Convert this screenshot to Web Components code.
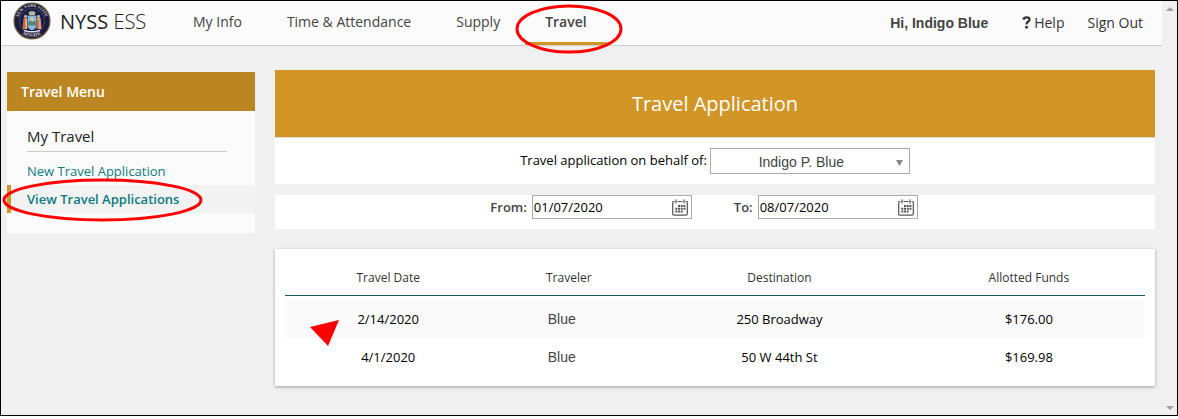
<!DOCTYPE html>
<html lang="en">
<head>
<meta charset="utf-8">
<title>NYSS ESS - Travel</title>
<style>
  html { background: #fff; }
  body { margin: 0; font-family: "Open Sans", sans-serif; font-size: 13px; line-height: 20px; color: #000; }
</style>
</head>
<body>
<ess-app></ess-app>

<script>
const define = (name, html, extra) => {
  const template = document.createElement('template');
  template.innerHTML = html;
  customElements.define(name, class extends HTMLElement {
    constructor() {
      super();
      this.attachShadow({ mode: 'open' }).append(template.content.cloneNode(true));
    }
    connectedCallback() { if (extra) extra(this, this.shadowRoot); }
  });
};

define('ess-seal', `
  <style>
    :host { display: block; width: 38px; height: 38px; flex: none; }
    svg { display: block; width: 100%; height: 100%; }
    text { font-family: "Liberation Serif", serif; font-weight: bold; fill: #d3cdcc; }
    .top { font-size: 4px; }
    .foot { font-size: 5px; }
  </style>
  <svg viewBox="0 0 38 38" role="img" aria-label="New York State Senate seal">
    <defs>
      <path id="top" d="M5.400 21 A13.800 13.800 0 1 1 32.600 21"/>
      <path id="foot" d="M7 29.500 A16 16 0 0 0 31 29.500"/>
    </defs>
    <circle cx="19" cy="19" r="18" fill="#1c1c3c" stroke="#7c6648" stroke-width="1.200"/>
    <circle cx="19" cy="19" r="12.600" fill="#18204a" stroke="#55506a" stroke-width=".6"/>
    <text class="top"><textPath href="#top" startOffset="50%" text-anchor="middle">NEW YORK STATE</textPath></text>
    <text class="foot"><textPath href="#foot" startOffset="50%" text-anchor="middle">SENATE</textPath></text>
    <path d="M14.500 13.500h9V23q0 3.500-4.500 5q-4.500-1.500-4.500-5z" fill="#7fb4e0"/>
    <path d="M14.500 21l3-2.500 2 1.500 2-1 2 2v2.500h-9z" fill="#56866f"/>
    <path d="M15 24h8q-1 3-4 4q-3-1-4-4z" fill="#8fb8d8"/>
    <circle cx="19" cy="17" r="1.700" fill="#f0d27a"/>
    <path d="M15.500 10.500q3.500-3 7 0l-1 2.500h-5z" fill="#d9c08a"/>
    <path d="M17.500 10h3v1.500h-3z" fill="#7fa8d8"/>
    <path d="M10.500 16h3.500l.5 11h-5z" fill="#d0683c"/>
    <path d="M12.500 17h1.500v10h-1.500z" fill="#e8c0a0"/>
    <path d="M24 16h3.500l1 11h-5z" fill="#e0a088"/>
    <path d="M24 18h1.500v9h-1.500z" fill="#c8603c"/>
    <circle cx="12.500" cy="14.500" r="1.400" fill="#e0bca0"/>
    <circle cx="25.500" cy="14.500" r="1.400" fill="#e0bca0"/>
    <path d="M10.500 27.500q8.500 3 17 0l-1 2q-7.500 2-15 0z" fill="#d5d8e2"/>
  </svg>`);

define('ess-ring', `
  <style>
    :host { display: block; position: absolute; pointer-events: none; z-index: 2; }
    svg { display: block; width: 100%; height: 100%; overflow: visible; }
    ellipse { fill: none; stroke: #f00; stroke-width: 3px; }
  </style>
  <svg aria-hidden="true"><ellipse cx="50%" cy="50%" rx="50%" ry="50%"/></svg>`);

define('ess-nav-link', `
  <style>
    :host { display: flex; position: relative; }
    a { box-sizing: border-box; height: 44px; padding: 0 20px; line-height: 42px; font-size: 14px; color: #444; text-decoration: none; }
    :host([current]) a { border-bottom: 3px solid #d19525; font-weight: 600; }
    ess-ring { display: none; left: -8px; top: 5px; width: 104px; height: 46px; }
    :host([current]) ess-ring { display: block; }
  </style>
  <a href="#"><slot></slot></a><ess-ring></ess-ring>`);

define('ess-topbar', `
  <style>
    :host { display: flex; align-items: flex-start; box-sizing: border-box; height: 45px; padding: 0 19px 0 12px; background: #fbfbfb; border-bottom: 1px solid #ccc; }
    .brand { display: flex; gap: 9px; padding-top: 1px; width: 160px; font-size: 20px; line-height: 40px; color: #222; white-space: nowrap; text-decoration: none; }
    .brand b { font-weight: 400; }
    .brand span { font-weight: 300; }
    nav { display: flex; gap: 5px; flex: 1; }
    .user { display: flex; line-height: 44px; font-size: 14px; color: #333; white-space: nowrap; }
    .user strong { font-family: "Liberation Sans", sans-serif; color: #444; margin-right: 34px; }
    .user a { color: #333; text-decoration: none; margin-right: 23px; display: flex; align-items: center; gap: 3px; }
    .user a:last-child { margin-right: 0; }
    svg { display: block; }
  </style>
  <a class="brand" href="#"><ess-seal></ess-seal><div><b>NYSS</b> <span>ESS</span></div></a>
  <nav>
    <ess-nav-link>My Info</ess-nav-link>
    <ess-nav-link>Time &amp; Attendance</ess-nav-link>
    <ess-nav-link>Supply</ess-nav-link>
    <ess-nav-link current>Travel</ess-nav-link>
  </nav>
  <div class="user">
    <strong>Hi, Indigo Blue</strong>
    <a href="#"><svg width="9" height="15" viewBox="0 0 9 15" aria-hidden="true"><path d="M1.300 3.600Q2 1.300 4.500 1.300q3 0 3 2.200 0 1.300-1.500 2.200Q4.500 6.600 4.500 8.500" fill="none" stroke="#333" stroke-width="2.200"/><path d="M3.200 10h2.600v2.500H3.200z" fill="#333"/></svg>Help</a>
    <a href="#">Sign Out</a>
  </div>`);

define('ess-menu-link', `
  <style>
    :host { display: block; position: relative; }
    a { display: block; padding: 0 16px; border-left: 4px solid transparent; line-height: 28px; color: #0c7b80; text-decoration: none; }
    :host([current]) a { background: #f3f3f3; border-color: #d19525; font-weight: 600; }
    ess-ring { display: none; left: -3px; top: -5px; width: 197px; height: 40px; }
    :host([current]) ess-ring { display: block; }
  </style>
  <a href="#"><slot></slot></a><ess-ring></ess-ring>`);

define('ess-sidebar', `
  <style>
    :host { display: block; width: 248px; flex: none; background: #fbfbfb; padding-bottom: 20px; box-sizing: border-box; }
    h2 { margin: 0; padding: 0 14px; font-size: 14px; font-weight: 600; line-height: 39px; color: #fff; background: #bb8621; }
    h3 { margin: 10px 28px 5px 20px; font-size: 15px; font-weight: 500; line-height: 30px; color: #222; border-bottom: 1px solid #ccc; }
  </style>
  <h2>Travel Menu</h2>
  <h3>My Travel</h3>
  <nav>
    <ess-menu-link>New Travel Application</ess-menu-link>
    <ess-menu-link current>View Travel Applications</ess-menu-link>
  </nav>`);

define('ess-traveler-select', `
  <style>
    :host { display: flex; justify-content: center; gap: 3px; padding: 10px 0; background: #fff; border-top: 1px solid #ddd; }
    label { line-height: 24px; }
    .box { display: grid; align-items: center; }
    select, svg { grid-area: 1 / 1; }
    select { appearance: none; box-sizing: border-box; width: 200px; height: 26px; margin: 0; padding: 2px 17px 0 0; border: 1px solid #aaa; border-radius: 0; background: #fff; color: #444; font: 14px "Liberation Sans", sans-serif; text-align: center; text-align-last: center; }
    svg { justify-self: end; margin: 4px 7px 0 0; pointer-events: none; }
  </style>
  <label for="who">Travel application on behalf of:</label>
  <div class="box">
    <select id="who"><option>Indigo P. Blue</option></select>
    <svg width="7" height="6" aria-hidden="true"><path d="M0 0h7L3.500 6z" fill="#888"/></svg>
  </div>`);

define('ess-date-field', `
  <style>
    :host { display: flex; gap: 5px; }
    label { font-weight: 600; line-height: 24px; color: #444; }
    .box { display: grid; align-items: center; }
    input, svg { grid-area: 1 / 1; }
    input { box-sizing: border-box; width: 160px; height: 24px; margin: 0; padding: 0 24px 0 1px; border: 1px solid #aaa; background: #fff; color: #000; font: 13px "Open Sans", sans-serif; }
    svg { justify-self: end; margin-right: 4px; pointer-events: none; }
  </style>
  <label for="date"></label>
  <div class="box">
    <input id="date" type="text">
    <svg width="16" height="17" viewBox="0 0 16 17" aria-hidden="true">
      <path d="M2.500 2.500H1.500q-.8 0-.8.8V15q0 1.200 1.200 1.200h12.200q1.200 0 1.200-1.200V3.300q0-.8-.8-.8H13.500M5.500 2.500h5" fill="none" stroke="#555" stroke-width="1.200"/>
      <path d="M4 .5v4M12 .5v4" stroke="#555" stroke-width="1.200"/>
      <path d="M6 6h2v2H6zM8.700 6h2v2h-2zM11.400 6h2v2h-2zM3.300 8.700h2v2h-2zM6 8.700h2v2H6zM8.700 8.700h2v2h-2zM11.400 8.700h2v2h-2zM3.300 11.400h2v2h-2zM6 11.400h2v2H6zM8.700 11.400h2v2h-2z" fill="#555"/>
    </svg>
  </div>`, (host, root) => {
    root.querySelector('label').textContent = host.getAttribute('label');
    root.querySelector('input').value = host.getAttribute('value');
  });

define('ess-date-range', `
  <style>
    :host { display: flex; justify-content: center; gap: 42px; padding: 0 22px 10px 0; background: #fff; }
  </style>
  <ess-date-field label="From:" value="01/07/2020"></ess-date-field>
  <ess-date-field label="To:" value="08/07/2020"></ess-date-field>`);

define('ess-travel-table', `
  <style>
    :host { display: block; position: relative; padding: 10px; background: #fff; box-shadow: 0 1px 3px rgba(0,0,0,.35); }
    table { width: 100%; border-collapse: separate; border-spacing: 0; table-layout: fixed; text-align: center; }
    col:nth-child(1) { width: 24%; }
    col:nth-child(2) { width: 18%; }
    col:nth-child(3) { width: 31%; }
    th { box-sizing: border-box; height: 37px; padding: 2px 0 0; font-size: 12px; font-weight: 500; color: #333; border-bottom: 1px solid #1b5b68; }
    .gap td { height: 4px; line-height: 0; }
    td { height: 38px; padding: 0; }
    .odd { background: #fafafa; }
    td.name { padding-right: 14px; font: 14px "Liberation Sans", sans-serif; color: #444; }
    .pointer { position: absolute; left: 35px; top: 71px; }
  </style>
  <table>
    <colgroup><col><col><col><col></colgroup>
    <thead><tr><th>Travel Date</th><th>Traveler</th><th>Destination</th><th>Allotted Funds</th></tr></thead>
    <tbody class="gap" aria-hidden="true"><tr><td colspan="4"></td></tr></tbody>
    <tbody>
      <tr class="odd"><td>2/14/2020</td><td class="name">Blue</td><td>250 Broadway</td><td>$176.00</td></tr>
      <tr><td>4/1/2020</td><td class="name">Blue</td><td>50 W 44th St</td><td>$169.98</td></tr>
    </tbody>
  </table>
  <svg class="pointer" width="30" height="26" aria-hidden="true"><path d="M0 7L29 0 18 26z" fill="#f00"/></svg>`);

define('ess-panel', `
  <style>
    :host { display: block; flex: 1; min-width: 0; }
    h1 { margin: 0; font-size: 20px; font-weight: 400; line-height: 67px; text-align: center; color: #fff; background: #d19525; }
    ess-date-range { margin: 11px 0 20px; }
  </style>
  <h1>Travel Application</h1>
  <ess-traveler-select></ess-traveler-select>
  <ess-date-range></ess-date-range>
  <ess-travel-table></ess-travel-table>`);

define('ess-scrollbar', `
  <style>
    :host { display: flex; flex-direction: column; justify-content: space-between; align-items: center; width: 15px; flex: none; box-sizing: border-box; padding: 6px 0 5px; background: #f0f0f0; }
    svg { display: block; }
  </style>
  <svg width="8" height="4" aria-hidden="true"><path d="M0 4h8L4 0z" fill="#a0a0a0"/></svg>
  <svg width="8" height="4" aria-hidden="true"><path d="M0 0h8L4 4z" fill="#a0a0a0"/></svg>`);

define('ess-app', `
  <style>
    :host { display: flex; border: 1px solid #000; background: #f0f0f0; }
    .page { flex: 1; min-width: 0; }
    main { display: flex; align-items: flex-start; gap: 20px; padding: 24px 7px 29px 6px; }
    ess-sidebar { margin-top: 2px; }
  </style>
  <div class="page">
    <ess-topbar></ess-topbar>
    <main><ess-sidebar></ess-sidebar><ess-panel></ess-panel></main>
  </div>
  <ess-scrollbar></ess-scrollbar>`);
</script>
</body>
</html>
